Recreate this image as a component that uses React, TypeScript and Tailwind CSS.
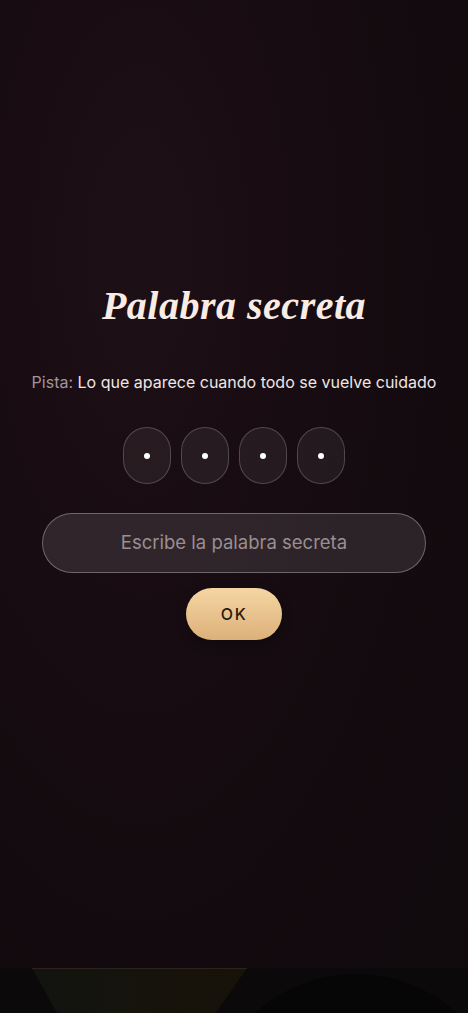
import React from "react";

export default function App() {
  return (
    <div className="relative w-full h-[1013px] overflow-hidden bg-[#140a0f]" style={{ fontFamily: "Inter, 'Noto Sans', sans-serif" }}>
      <div className="absolute inset-0 bg-[radial-gradient(ellipse_at_30%_25%,#1d0f16_0%,#150b10_50%,#100a0d_100%)]" />
      <div className="relative flex flex-col items-center pt-[282px]">
        <h1 className="text-[#f8ece4] text-[40px] italic font-bold leading-[48px] tracking-[0.5px]" style={{ fontFamily: "'Liberation Serif', 'DejaVu Serif', serif" }}>
          Palabra secreta
        </h1>
        <p className="mt-[42px] text-[16px] leading-[20px] text-[#f1e6e4]">
          <span className="text-[#a39597]">Pista:</span> Lo que aparece cuando todo se vuelve cuidado
        </p>
        <div className="mt-[35px] flex gap-[10px]">
          {[0, 1, 2, 3].map((i) => (
            <div key={i} className="w-[48px] h-[57px] rounded-[24px] border border-white/20 bg-white/[0.06] flex items-center justify-center">
              <div className="w-[6px] h-[6px] rounded-full bg-white" />
            </div>
          ))}
        </div>
        <div className="mt-[29px] w-[384px] h-[60px] rounded-full border border-white/30 bg-white/[0.1] flex items-center justify-center">
          <span className="text-[18.5px] text-[#9a8f91]">Escribe la palabra secreta</span>
        </div>
        <button className="mt-[15px] w-[96px] h-[52px] rounded-full bg-gradient-to-b from-[#f5d6a3] to-[#ddb07a] flex items-center justify-center text-[16px] font-medium tracking-[1.5px] text-[#2a1a12] shadow-[0_4px_12px_rgba(0,0,0,0.3)]">
          OK
        </button>
      </div>
      <div className="absolute left-0 right-0 top-[968px] bottom-0 bg-[#0b090a] overflow-hidden">
        <div className="absolute left-[32px] top-0 w-[215px] h-[46px] bg-gradient-to-r from-[#121410] via-[#15130c] to-[#181208]" style={{ clipPath: "polygon(0 0, 100% 0, 85% 100%, 12% 100%)" }} />
        <div className="absolute left-[32px] top-0 w-[215px] h-px bg-[#2a241c]" />
        <div className="absolute left-[206px] top-[6px] w-[300px] h-[300px] rounded-full bg-[#060607]" />
      </div>
    </div>
  );
}
